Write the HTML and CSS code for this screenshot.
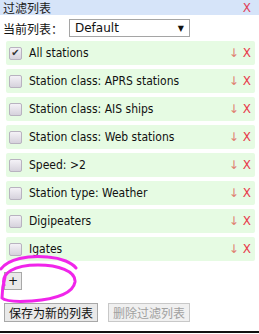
FILE: index.html
```html
<!DOCTYPE html>
<html lang="zh">
<head>
    <meta charset="UTF-8">
    <title>过滤列表</title>
    <link rel="stylesheet" href="styles.css">
</head>
<body>
    <div class="panel">
        <div class="titlebar">
            <span class="title">过滤列表</span>
            <span class="close">X</span>
        </div>

        <div class="current">
            <span class="current-label">当前列表：</span>
            <div class="select">
                <span>Default</span>
                <span class="select-arrow">▼</span>
            </div>
        </div>

        <ul class="filters">
            <li class="filter"><span class="check checked">✔</span><span class="name">All stations</span><span class="down">↓</span><span class="del">X</span></li>
            <li class="filter"><span class="check"></span><span class="name">Station class: APRS stations</span><span class="down">↓</span><span class="del">X</span></li>
            <li class="filter"><span class="check"></span><span class="name">Station class: AIS ships</span><span class="down">↓</span><span class="del">X</span></li>
            <li class="filter"><span class="check"></span><span class="name">Station class: Web stations</span><span class="down">↓</span><span class="del">X</span></li>
            <li class="filter"><span class="check"></span><span class="name">Speed: &gt;2</span><span class="down">↓</span><span class="del">X</span></li>
            <li class="filter"><span class="check"></span><span class="name">Station type: Weather</span><span class="down">↓</span><span class="del">X</span></li>
            <li class="filter"><span class="check"></span><span class="name">Digipeaters</span><span class="down">↓</span><span class="del">X</span></li>
            <li class="filter"><span class="check"></span><span class="name">Igates</span><span class="down">↓</span><span class="del">X</span></li>
        </ul>

        <div class="add-row">
            <button class="btn add-btn">+</button>
        </div>

        <div class="actions">
            <button class="btn">保存为新的列表</button>
            <button class="btn" disabled>删除过滤列表</button>
        </div>

        <div class="bottom-edge"></div>

        <!-- hand drawn highlight round the + button -->
        <svg class="scribble" width="80" height="52" viewBox="0 252 80 52">
            <path d="M1,269 C8,259 28,255 48,257 C62,258 72,263 76,268" />
            <path d="M4,285 C1,273 14,265 38,265 C58,265 76,271 75,282 C73,294 56,299 32,301 C16,302 5,301 2,298 C2,291 3,284 5,277" />
        </svg>
    </div>
</body>
</html>
```

FILE: styles.css
```css
body {
    margin: 0;
    background-color: white;
    font-family: "DejaVu Sans Condensed", "DejaVu Sans", "Noto Sans CJK SC", sans-serif;
    font-size: 12px;
    color: #111;
}

.panel {
    position: relative;
    width: 259px;
    height: 334px;
    overflow: hidden;
}

.titlebar {
    display: flex;
    justify-content: space-between;
    align-items: center;
    height: 15px;
    padding: 0 8px 0 3px;
    background-color: #d6e4f9;
}

.title {
    font-family: "Noto Sans CJK SC", sans-serif;
    font-size: 12px;
    line-height: 1;
    color: #1a1a1a;
}

.close {
    font-family: "DejaVu Sans", sans-serif;
    font-size: 12px;
    line-height: 1;
    color: #e0405a;
}

.current {
    display: flex;
    align-items: center;
    height: 18px;
    margin: 4px 0 0 3px;
}

.current-label {
    width: 66px;
    font-family: "Noto Sans CJK SC", sans-serif;
    font-size: 12px;
}

.select {
    display: flex;
    justify-content: space-between;
    align-items: center;
    box-sizing: border-box;
    width: 121px;
    height: 18px;
    padding: 0 5px;
    border: 1px solid #a5a5a5;
    font-family: "DejaVu Sans", sans-serif;
    font-size: 12px;
}

.select-arrow {
    font-size: 8px;
}

.filters {
    list-style: none;
    margin: 4px 0 0 0;
    padding: 0;
}

.filter {
    display: flex;
    align-items: center;
    height: 24px;
    margin: 0 4px 4px 6px;
    padding: 0 4px 0 3px;
    background-color: #e6fbe3;
    border-radius: 2px;
}

.check {
    display: flex;
    justify-content: center;
    align-items: center;
    box-sizing: border-box;
    width: 13px;
    height: 13px;
    border: 1px solid #b8b2c0;
    border-radius: 2px;
    background: linear-gradient(#f4f2f7, #d6d2dc);
    font-family: "DejaVu Sans", sans-serif;
    font-size: 10px;
    line-height: 1;
    color: #333;
}

.name {
    flex: 1;
    margin-left: 7px;
    white-space: nowrap;
}

.down {
    font-family: "DejaVu Sans", sans-serif;
    font-size: 12px;
    color: #e08070;
    margin-right: 4px;
}

.del {
    font-family: "DejaVu Sans", sans-serif;
    font-size: 12px;
    color: #e83a4a;
}

.add-row {
    margin: 11px 0 0 4px;
}

.btn {
    box-sizing: border-box;
    height: 19px;
    padding: 0 4px;
    border: 1px solid #a8a8a8;
    background-color: #e9e9e9;
    font-family: "Noto Sans CJK SC", sans-serif;
    font-size: 12px;
    line-height: 17px;
    color: #111;
}

.btn:disabled {
    color: #a0a0a0;
    background-color: #f0f0f0;
    border-color: #c8c8c8;
}

.add-btn {
    display: block;
    width: 18px;
    height: 18px;
    padding: 0;
    font-family: "DejaVu Sans", sans-serif;
}

.actions {
    display: flex;
    gap: 10px;
    margin: 13px 0 0 4px;
}

.bottom-edge {
    margin-top: 9px;
    height: 2px;
    background-color: #111;
}

.scribble {
    position: absolute;
    left: 0;
    top: 252px;
    fill: none;
    stroke: #f025ea;
    stroke-width: 3;
    stroke-linecap: round;
}
```
